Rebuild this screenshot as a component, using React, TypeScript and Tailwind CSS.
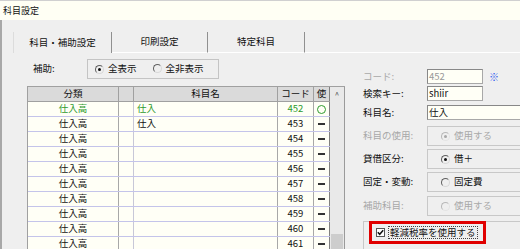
import React from 'react';

// ── Small controls ─────────────────────────────────────────────────────────────
function Radio({ on, dim }: { on?: boolean; dim?: boolean }) {
  return (
    <span
      className={`inline-flex w-[9px] h-[9px] rounded-full border items-center justify-center shrink-0 ${
        dim
          ? 'border-t-[#b8b8b8] border-l-[#b8b8b8] border-r-[#e4e4e4] border-b-[#e4e4e4]'
          : 'border-t-[#606060] border-l-[#606060] border-r-[#d8d8d8] border-b-[#d8d8d8]'
      }`}
    >
      {on && <span className={`w-[3px] h-[3px] rounded-full ${dim ? 'bg-[#a8a8a8]' : 'bg-[#111]'}`} />}
    </span>
  );
}

function RadioBox({ label, on, dim }: { label: string; on?: boolean; dim?: boolean }) {
  return (
    <div className="w-[110px] h-[20px] border border-[#c8c8c8] flex items-center pl-[13px] gap-[4px]">
      <Radio on={on} dim={dim} />
      <span className={dim ? 'text-[#a8a8a8]' : 'text-[#111]'}>{label}</span>
    </div>
  );
}

function Label({ children, dim }: { children: React.ReactNode; dim?: boolean }) {
  return <span className={`w-[64px] shrink-0 ${dim ? 'text-[#a8a8a8]' : 'text-[#111]'}`}>{children}</span>;
}

const ROWS = Array.from({ length: 11 }, (_, i) => ({
  code: 452 + i,
  name: i < 2 ? '仕入' : '',
  used: i === 0,
}));

// ── Component ──────────────────────────────────────────────────────────────────
export default function App() {
  return (
    <div className="w-[520px] h-[249px] overflow-hidden flex flex-col text-[9.5px] leading-none font-['Noto_Sans_CJK_JP','Noto_Sans',sans-serif] text-[#111]">
      {/* title */}
      <div className="h-[20px] shrink-0 bg-[#fffff4] border-t border-[#d0d0d0] flex items-center pl-[3px] text-[9px]">
        科目設定
      </div>

      <div className="flex-1 bg-[#efefef] border-l-2 border-[#a8a8a8] flex flex-col">
        {/* tabs */}
        <div className="mt-[12px] h-[21px] flex pl-[11px]">
          <div className="w-[99px] border-l border-[#dcdcdc] border-r border-r-[#909090] flex items-center justify-center">
            科目・補助設定
          </div>
          <div className="w-[96px] border-r border-[#909090] border-b border-b-white flex items-center justify-center">
            印刷設定
          </div>
          <div className="w-[97px] border-r border-[#909090] border-b border-b-white flex items-center justify-center">
            特定科目
          </div>
          <div className="flex-1 border-b border-white" />
        </div>

        <div className="flex-1 flex min-h-0">
          {/* ── left: list ── */}
          <div className="w-[343px] shrink-0 pl-[25px] flex flex-col">
            <div className="mt-[6px] h-[20px] flex items-center">
              <span className="w-[60px] pl-[6px]">補助:</span>
              <div className="w-[132px] h-[20px] border border-[#c4c4c4] flex items-center pl-[7px]">
                <Radio on />
                <span className="ml-[4px]">全表示</span>
                <span className="ml-[16px]"><Radio /></span>
                <span className="ml-[4px]">全非表示</span>
              </div>
            </div>

            <div className="mt-[7px] flex border-t border-l border-[#a0a0a0] bg-[#fffff6]">
              <div className="flex flex-col">
                <div className="h-[15px] flex bg-[#dadada] border-b border-[#a0a0a0]">
                  <div className="w-[91px] border-r border-[#a0a0a0] flex items-center justify-center">分類</div>
                  <div className="w-[15px] border-r border-[#a0a0a0]" />
                  <div className="w-[144px] border-r border-[#a0a0a0] flex items-center justify-center">科目名</div>
                  <div className="w-[36px] border-r border-[#a0a0a0] flex items-center justify-center">コード</div>
                  <div className="w-[16px] border-r border-[#808080] flex items-center justify-center">使</div>
                </div>
                {ROWS.map(r => (
                  <div
                    key={r.code}
                    className={`h-[15px] flex border-b border-[#c4c4ea] ${r.used ? 'text-[#2e9a2e]' : 'text-[#111]'}`}
                  >
                    <div className="w-[91px] border-r border-[#a8a8a8] flex items-center justify-center">仕入高</div>
                    <div className="w-[15px] border-r border-[#c8c8d8]" />
                    <div className="w-[144px] border-r border-[#a8a8a8] flex items-center pl-[3px]">{r.name}</div>
                    <div className="w-[36px] border-r border-[#a8a8a8] flex items-center justify-center">{r.code}</div>
                    <div className="w-[16px] border-r border-[#808080] flex items-center justify-center">
                      {r.used ? (
                        <span className="w-[9px] h-[9px] rounded-full border-[1.5px] border-[#2e9a2e]" />
                      ) : (
                        <span className="w-[7px] h-[1.5px] bg-[#333]" />
                      )}
                    </div>
                  </div>
                ))}
              </div>
              {/* scrollbar */}
              <div className="w-[15px] bg-[#e9e9e9] border-r border-[#9a9a9a] flex flex-col">
                <div className="h-[15px] flex items-center justify-center text-[8px] text-[#555]">^</div>
                <div className="h-[132px]" />
                <div className="h-[20px] mx-[1px] bg-[#cdcdcd]" />
              </div>
            </div>
          </div>

          {/* ── right: details ── */}
          <div className="flex-1 pl-[18px] pt-[16px] flex flex-col">
            <div className="h-[15px] flex items-center">
              <Label dim>コード:</Label>
              <div className="w-[56px] h-[15px] border border-[#a8a8a8] border-t-[#888] border-l-[#888] bg-[#fffff6] text-[#999] flex items-center pl-[1px]">
                452
              </div>
              <span className="ml-[6px] text-[#2f5cf0] text-[10px]">※</span>
            </div>
            <div className="mt-[2px] h-[15px] flex items-center">
              <Label>検索キー:</Label>
              <div className="w-[56px] h-[15px] border border-[#a8a8a8] border-t-[#888] border-l-[#888] bg-[#fffff6] flex items-center pl-[1px]">
                shiir
              </div>
            </div>
            <div className="mt-[4px] h-[15px] flex items-center">
              <Label>科目名:</Label>
              <div className="w-[110px] h-[15px] border border-[#a8a8a8] border-t-[#888] border-l-[#888] bg-[#fffff6] flex items-center pl-[1px]">
                仕入
              </div>
            </div>
            <div className="mt-[6px] flex items-center">
              <Label dim>科目の使用:</Label>
              <RadioBox label="使用する" on dim />
            </div>
            <div className="mt-[3px] flex items-center">
              <Label>貸借区分:</Label>
              <RadioBox label="借＋" on />
            </div>
            <div className="mt-[3px] flex items-center">
              <Label>固定・変動:</Label>
              <RadioBox label="固定費" />
            </div>
            <div className="mt-[4px] flex items-center">
              <Label dim>補助科目:</Label>
              <RadioBox label="使用する" dim />
            </div>
            <div className="mt-[5px] w-[180px] h-[40px] border border-[#c8c8c8] pl-[5px]">
              <div className="-mt-[1px] w-[117px] h-[23px] border-[3px] border-[#e00000] flex items-center pl-[4px]">
                <span className="w-[9px] h-[9px] border border-[#555] bg-white flex items-center justify-center shrink-0">
                  <svg width="7" height="7" viewBox="0 0 7 7">
                    <polyline points="0.8 3.3 2.7 5.3 6.2 1.3" fill="none" stroke="#111" strokeWidth="1.5" />
                  </svg>
                </span>
                <span className="ml-[3px] border border-dotted border-[#444] px-[1px] py-[1px]">軽減税率を使用する</span>
              </div>
            </div>
          </div>
        </div>
      </div>
    </div>
  );
}
